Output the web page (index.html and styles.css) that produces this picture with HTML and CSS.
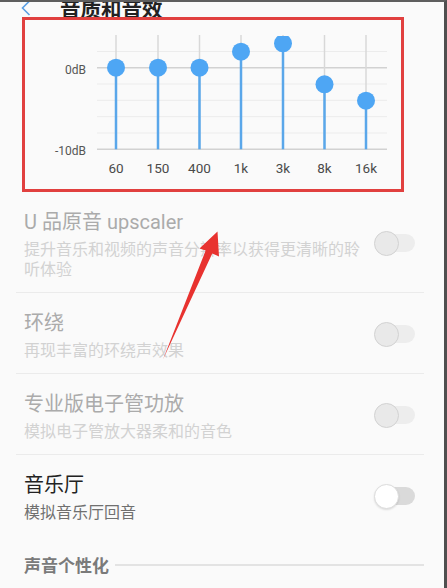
FILE: index.html
```html
<!DOCTYPE html>
<html lang="zh-CN">
<head>
<meta charset="utf-8">
<link rel="stylesheet" href="styles.css">
</head>
<body>
<div class="screen">
  <div class="header">
    <svg class="back" width="10" height="17" viewBox="0 0 10 17"><polyline points="8.5,1 1.5,8 8.5,15" fill="none" stroke="#5b9fe3" stroke-width="1.6"/></svg>
    <div class="title">音质和音效</div>
  </div>

  <div class="eq">
    <svg class="chart" width="376" height="169" viewBox="25 20 376 169">
      <defs><clipPath id="c"><rect x="25" y="36" width="376" height="153"/></clipPath></defs>
      <g stroke="#ececec" stroke-width="1">
        <line x1="97" x2="387" y1="51.5" y2="51.5"/>
        <line x1="97" x2="387" y1="84" y2="84"/>
        <line x1="97" x2="387" y1="100.3" y2="100.3"/>
        <line x1="97" x2="387" y1="116.7" y2="116.7"/>
        <line x1="97" x2="387" y1="133" y2="133"/>
      </g>
      <g stroke="#d2d2d2" stroke-width="1.4">
        <line x1="97" x2="387" y1="67.7" y2="67.7"/>
        <line x1="97" x2="387" y1="149.3" y2="149.3"/>
      </g>
      <g stroke="#d8d8d8" stroke-width="1.5">
        <line x1="116" x2="116" y1="35" y2="149.3"/>
        <line x1="158" x2="158" y1="35" y2="149.3"/>
        <line x1="199.5" x2="199.5" y1="35" y2="149.3"/>
        <line x1="241" x2="241" y1="35" y2="149.3"/>
        <line x1="283" x2="283" y1="35" y2="149.3"/>
        <line x1="324.5" x2="324.5" y1="35" y2="149.3"/>
        <line x1="366" x2="366" y1="35" y2="149.3"/>
      </g>
      <g stroke="#5aa7ea" stroke-width="2.5" clip-path="url(#c)">
        <line x1="116" x2="116" y1="67.7" y2="149.3"/>
        <line x1="158" x2="158" y1="67.7" y2="149.3"/>
        <line x1="199.5" x2="199.5" y1="67.7" y2="149.3"/>
        <line x1="241" x2="241" y1="51.7" y2="149.3"/>
        <line x1="283" x2="283" y1="43.3" y2="149.3"/>
        <line x1="324.5" x2="324.5" y1="84.3" y2="149.3"/>
        <line x1="366" x2="366" y1="100.7" y2="149.3"/>
      </g>
      <g fill="#4ea6f4" clip-path="url(#c)">
        <circle cx="116" cy="67.7" r="9"/>
        <circle cx="158" cy="67.7" r="9"/>
        <circle cx="199.5" cy="67.7" r="9"/>
        <circle cx="241" cy="51.7" r="9"/>
        <circle cx="283" cy="43.3" r="9"/>
        <circle cx="324.5" cy="84.3" r="9"/>
        <circle cx="366" cy="100.7" r="9"/>
      </g>
      <g class="db" text-anchor="end">
        <text x="86" y="74.2">0dB</text>
        <text x="86" y="155">-10dB</text>
      </g>
      <g class="freq" text-anchor="middle">
        <text x="116" y="173.3">60</text>
        <text x="158" y="173.3">150</text>
        <text x="199.5" y="173.3">400</text>
        <text x="241" y="173.3">1k</text>
        <text x="283" y="173.3">3k</text>
        <text x="324.5" y="173.3">8k</text>
        <text x="366" y="173.3">16k</text>
      </g>
    </svg>
  </div>

  <div class="list">
    <div class="row disabled">
      <div class="text">
        <div class="name">U 品原音 upscaler</div>
        <div class="desc">提升音乐和视频的声音分辨率以获得更清晰的聆听体验</div>
      </div>
      <div class="toggle"></div>
    </div>
    <div class="row disabled">
      <div class="text">
        <div class="name">环绕</div>
        <div class="desc">再现丰富的环绕声效果</div>
      </div>
      <div class="toggle"></div>
    </div>
    <div class="row disabled">
      <div class="text">
        <div class="name">专业版电子管功放</div>
        <div class="desc">模拟电子管放大器柔和的音色</div>
      </div>
      <div class="toggle"></div>
    </div>
    <div class="row last">
      <div class="text">
        <div class="name">音乐厅</div>
        <div class="desc">模拟音乐厅回音</div>
      </div>
      <div class="toggle"></div>
    </div>
  </div>

  <div class="section">
    <span class="section-title">声音个性化</span>
    <span class="section-line"></span>
  </div>

  <svg class="annot-arrow" width="447" height="588" viewBox="0 0 447 588">
    <polygon points="217.5,231.5 219,256.5 212.3,253.4 163,359.5 205.6,250.6 199.5,248.5" fill="#e8322f"/>
  </svg>
</div>
</body>
</html>
```

FILE: styles.css
```css
* { box-sizing: border-box; }
html, body { margin: 0; padding: 0; }
body {
  background: #fafafa;
  font-family: "Roboto", "Noto Sans CJK SC", sans-serif;
  width: 447px;
  height: 588px;
  overflow: hidden;
}
.screen {
  position: relative;
  width: 447px;
  height: 588px;
  border-top: 2px solid #5e5e5e;
  border-right: 3px solid #4f4f4f;
  overflow: hidden;
}
.header {
  height: 15px;
  display: flex;
  align-items: center;
  padding-left: 21px;
  gap: 29px;
}
.back { display: block; flex: none; margin-top: -2px; }
.title {
  font-family: "Noto Sans CJK SC", sans-serif;
  font-size: 20.5px;
  font-weight: 700;
  line-height: 24px;
  color: #222;
  margin-top: -3px;
  white-space: nowrap;
}
.eq {
  position: relative;
  margin-left: 22px;
  width: 382px;
  height: 175px;
  border: 3px solid #e1403f;
}
.chart { display: block; }
.db text { font-family: "Roboto", sans-serif; font-size: 12px; fill: #555; }
.freq text { font-family: "Roboto", sans-serif; font-size: 13.5px; fill: #4a4a4a; }

.list { margin: 0 20px 0 16px; }
.row {
  display: flex;
  align-items: center;
  gap: 10px;
  padding: 15px 9px 14px 8px;
  border-bottom: 1px solid #ebebeb;
}
.row.last { border-bottom: none; }
.text { flex: 1; min-width: 0; }
.name {
  font-family: "Noto Sans CJK SC", sans-serif;
  font-size: 20px;
  line-height: 30px;
  color: #222;
}
.name { font-family: "Roboto", "Noto Sans CJK SC", sans-serif; }
.desc {
  font-family: "Noto Sans CJK SC", sans-serif;
  font-size: 16px;
  line-height: 20px;
  margin-top: 1px;
  color: #707070;
}
.disabled .name { color: #ababab; }
.disabled .desc { color: #d2d2d2; }

.toggle {
  position: relative;
  flex: none;
  width: 41px;
  height: 23px;
}
.toggle::before {
  content: "";
  position: absolute;
  left: 2px; right: 0; top: 2.5px;
  height: 18px;
  border-radius: 9px;
  background: #dadada;
}
.toggle::after {
  content: "";
  position: absolute;
  left: 0; top: 0;
  width: 23px; height: 23px;
  border-radius: 50%;
  background: #fff;
  border: 1px solid #dcdcdc;
  box-shadow: 0 1px 2px rgba(0,0,0,0.12);
}
.disabled .toggle::before { background: #ededed; }
.disabled .toggle::after {
  background: #e9e9e9;
  border: 1.5px solid #d2d2d2;
  box-shadow: none;
}

.section {
  display: flex;
  align-items: center;
  gap: 6px;
  margin: 19px 20px 0 24px;
}
.section-title {
  font-family: "Noto Sans CJK SC", sans-serif;
  font-size: 17px;
  font-weight: 700;
  line-height: 22px;
  color: #7a7a7a;
  white-space: nowrap;
}
.section-line {
  flex: 1;
  height: 1.5px;
  background: #e3e3e3;
}
.annot-arrow {
  position: absolute;
  left: 0;
  top: -2px;
  pointer-events: none;
}
```
